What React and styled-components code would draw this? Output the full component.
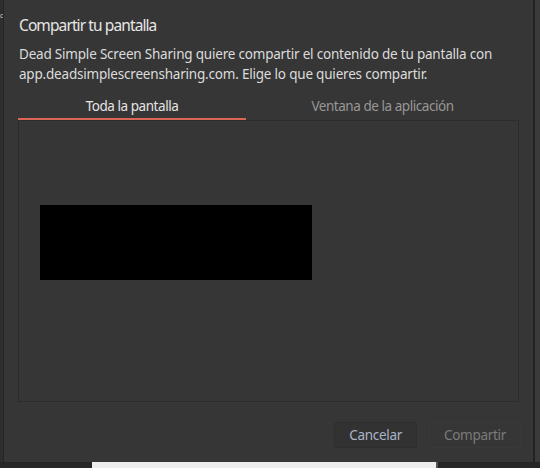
import React from "react";
import styled, { createGlobalStyle } from "styled-components";

const Global = createGlobalStyle`
  html, body { margin: 0; padding: 0; background: #2b2b2b; }
  body { width: 540px; height: 468px; overflow: hidden; }
`;

const FONT = `"Noto Sans", "DejaVu Sans", sans-serif`;

const Page = styled.div`
  width: 540px;
  height: 468px;
  display: flex;
  flex-direction: column;
  font-family: ${FONT};
  overflow: hidden;
`;

const Top = styled.div`
  display: flex;
  height: 462px;
`;

const LeftStrip = styled.div`
  width: 4px;
  background: #2e2e2e;
  border-right: 1px solid #262626;
  color: #cfcfcf;
  font-size: 7px;
  line-height: 1;
  padding-top: 12px;
  box-sizing: border-box;
  overflow: hidden;
`;

const RightStrip = styled.div`
  width: 5px;
  background: #3a3a3a;
`;

const Dialog = styled.div`
  flex: 1;
  background: #363636;
  border-right: 2px solid #232323;
  display: flex;
  flex-direction: column;
  padding: 0 14px;
`;

const Title = styled.div`
  margin: 14px 0 0 1px;
  font-size: 15.5px;
  letter-spacing: -0.9px;
  line-height: 22px;
  color: #e6e6e6;
`;

const Desc = styled.div`
  margin: 9px 0 0 1px;
  font-size: 13.5px;
  letter-spacing: -0.2px;
  line-height: 19.5px;
  color: #dcdcdc;
  white-space: nowrap;
`;

const Tabs = styled.div`
  display: flex;
  margin-top: 9px;
  width: 501px;
`;

const Tab = styled.div`
  ${(p) => (p.$grow ? "flex: 1;" : `width: ${p.$w}px;`)}
  height: 27px;
  display: flex;
  align-items: center;
  justify-content: center;
  font-size: 13.5px;
  letter-spacing: -0.45px;
  color: ${(p) => (p.$active ? "#e4e4e4" : "#979797")};
  box-sizing: border-box;
  border-bottom: 2px solid ${(p) => (p.$active ? "#dc6656" : "transparent")};
`;

const Frame = styled.div`
  width: 501px;
  height: 282px;
  box-sizing: border-box;
  border: 1px solid #2c2c2c;
  background: #363636;
  padding: 84px 0 0 21px;
`;

const Preview = styled.div`
  width: 272px;
  height: 75px;
  background: #000;
`;

const Actions = styled.div`
  display: flex;
  justify-content: flex-end;
  align-items: center;
  gap: 12px;
  margin: 20px -2px 0 0;
`;

const Button = styled.div`
  height: 26px;
  box-sizing: border-box;
  padding: 0 14px;
  display: flex;
  align-items: center;
  font-size: 13.5px;
  letter-spacing: -0.3px;
  color: ${(p) => (p.$disabled ? "#7b7b7b" : "#aab4c8")};
  background: ${(p) => (p.$disabled ? "transparent" : "#323232")};
  border: 1px solid ${(p) => (p.$disabled ? "#393939" : "#2e2e2e")};
  border-radius: 3px;
`;

const Bottom = styled.div`
  height: 6px;
  display: flex;
  background: #262626;
`;

const BehindWindow = styled.div`
  margin-left: 92px;
  width: 344px;
  background: #ededed;
  border-right: 2px solid #555;
`;

export default function App() {
  return (
    <Page>
      <Global />
      <Top>
        <LeftStrip>c</LeftStrip>
        <Dialog>
          <Title>Compartir tu pantalla</Title>
          <Desc>
            Dead Simple Screen Sharing quiere compartir el contenido de tu pantalla con
            <br />
            app.deadsimplescreensharing.com. Elige lo que quieres compartir.
          </Desc>
          <Tabs>
            <Tab $w={228} $active>Toda la pantalla</Tab>
            <Tab $grow>Ventana de la aplicación</Tab>
          </Tabs>
          <Frame>
            <Preview />
          </Frame>
          <Actions>
            <Button>Cancelar</Button>
            <Button $disabled>Compartir</Button>
          </Actions>
        </Dialog>
        <RightStrip />
      </Top>
      <Bottom>
        <BehindWindow />
      </Bottom>
    </Page>
  );
}
